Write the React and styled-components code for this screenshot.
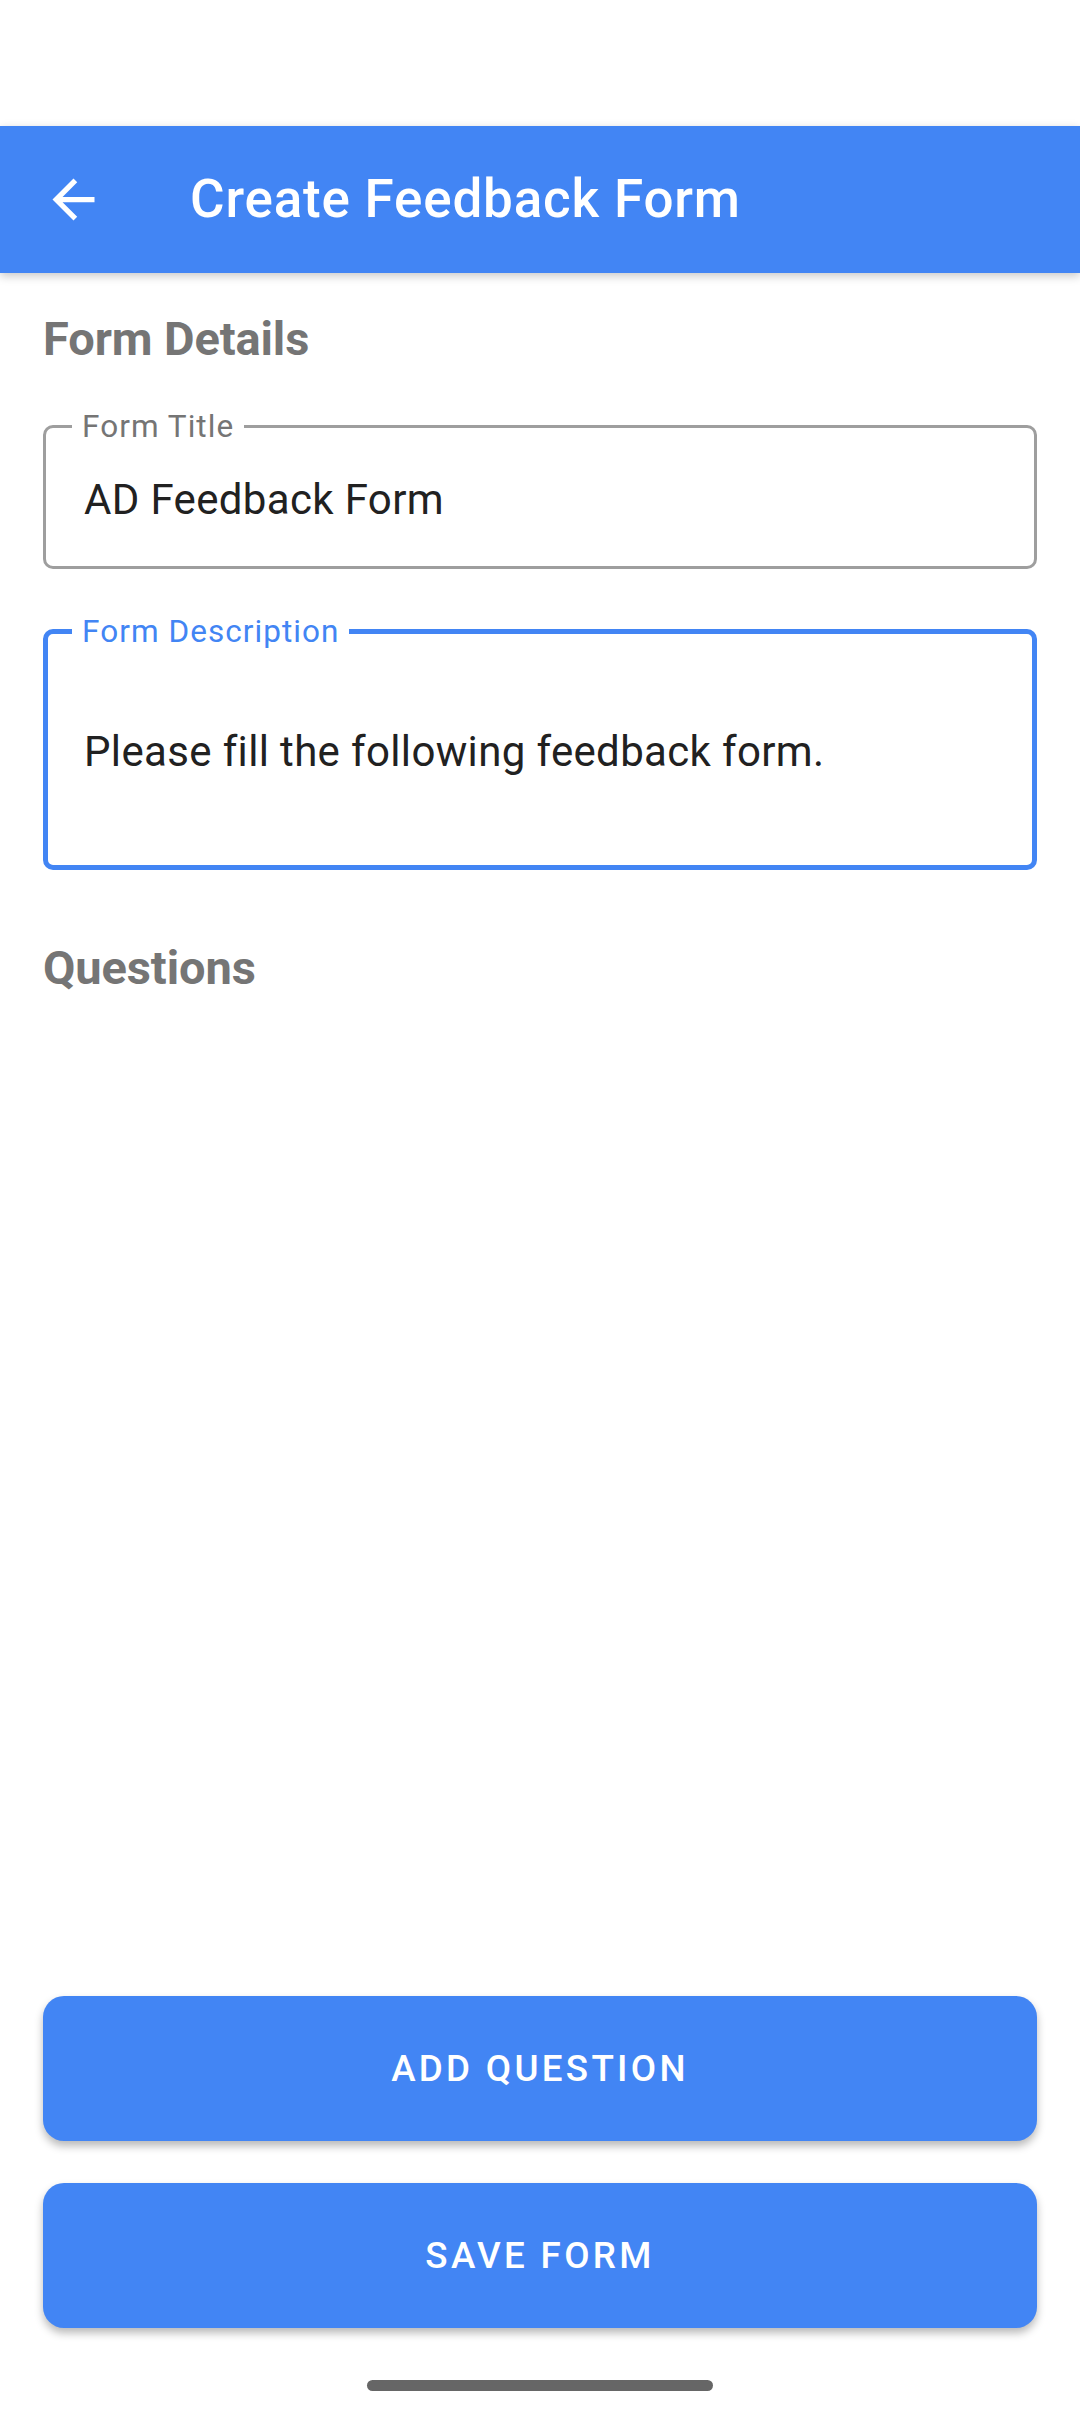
import * as React from "react";
import styled, { createGlobalStyle } from "styled-components";

const GlobalStyle = createGlobalStyle`
  html, body {
    margin: 0;
    padding: 0;
    background: #ffffff;
    font-family: Roboto, "Noto Sans", "Liberation Sans", sans-serif;
  }
  * {
    box-sizing: border-box;
  }
`;

function App() {
  return (
    <Screen>
      <GlobalStyle />
      <StatusBar />

      {/* Top app bar */}
      <AppBar>
        <BackButton aria-label="Back">
          <svg width="63" height="63" viewBox="0 0 24 24" fill="#ffffff">
            <path d="M20 11H7.83l5.59-5.59L12 4l-8 8 8 8 1.41-1.41L7.83 13H20v-2z" />
          </svg>
        </BackButton>
        <AppTitle>Create Feedback Form</AppTitle>
      </AppBar>

      <Content>
        <SectionTitle>Form Details</SectionTitle>

        <Field $height={144}>
          <FloatingLabel>Form Title</FloatingLabel>
          <FieldValue>AD Feedback Form</FieldValue>
        </Field>

        <Field $height={241} $focused>
          <FloatingLabel $focused>Form Description</FloatingLabel>
          <FieldValue>Please fill the following feedback form.</FieldValue>
        </Field>

        <SectionTitle $top={70}>Questions</SectionTitle>
      </Content>

      <Actions>
        <ActionButton>Add Question</ActionButton>
        <ActionButton>Save Form</ActionButton>
      </Actions>

      <NavBar>
        <NavHandle />
      </NavBar>
    </Screen>
  );
}

const Screen = styled.div`
  display: flex;
  flex-direction: column;
  min-height: 100vh;
  width: 100%;
  background: #ffffff;
`;

const StatusBar = styled.div`
  height: 126px;
  flex-shrink: 0;
`;

const AppBar = styled.header`
  height: 147px;
  flex-shrink: 0;
  display: flex;
  align-items: center;
  padding-left: 42px;
  background-color: #4285f4;
  box-shadow: 0 3px 9px rgba(0, 0, 0, 0.22);
  position: relative;
  z-index: 1;
`;

const BackButton = styled.div`
  width: 63px;
  height: 63px;
  display: flex;
  align-items: center;
  justify-content: center;
`;

const AppTitle = styled.h1`
  margin: 0 0 0 85px;
  font-size: 53px;
  font-weight: 500;
  line-height: 1;
  letter-spacing: 0.8px;
  color: #ffffff;
`;

const Content = styled.main`
  flex: 1;
  display: flex;
  flex-direction: column;
  padding: 0 43px;
`;

const SectionTitle = styled.h2`
  margin: ${(p) => p.$top || 38}px 0 0;
  font-size: 47px;
  font-weight: 700;
  line-height: 56px;
  letter-spacing: -0.1px;
  color: #757575;
`;

const Field = styled.div`
  position: relative;
  display: flex;
  align-items: center;
  height: ${(p) => p.$height}px;
  margin-top: ${(p) => (p.$focused ? 60 : 58)}px;
  padding: 6px 0 0 ${(p) => (p.$focused ? 36 : 38)}px;
  border: ${(p) => (p.$focused ? "5px solid #4285f4" : "3px solid #9e9e9e")};
  border-radius: 10px;
`;

const FloatingLabel = styled.span`
  position: absolute;
  top: ${(p) => (p.$focused ? -2.5 : -1.5)}px;
  left: ${(p) => (p.$focused ? 24 : 26)}px;
  transform: translateY(-50%);
  padding: 0 10px;
  background: #ffffff;
  font-size: 31.5px;
  line-height: 1;
  letter-spacing: 1.05px;
  color: ${(p) => (p.$focused ? "#4285f4" : "#757575")};
`;

const FieldValue = styled.span`
  font-size: 42px;
  line-height: 1.2;
  letter-spacing: 0.35px;
  color: #212121;
`;

const Actions = styled.div`
  display: flex;
  flex-direction: column;
  gap: 42px;
  padding: 0 43px;
`;

const ActionButton = styled.button`
  height: 145px;
  width: 100%;
  border: none;
  border-radius: 21px;
  background-color: #4285f4;
  box-shadow: 0 5px 9px rgba(0, 0, 0, 0.28);
  font-family: Roboto, "Noto Sans", "Liberation Sans", sans-serif;
  font-size: 36.75px;
  font-weight: 500;
  letter-spacing: 3.3px;
  text-transform: uppercase;
  color: #ffffff;
  cursor: pointer;
`;

const NavBar = styled.div`
  height: 84px;
  display: flex;
  justify-content: center;
  padding-top: 52px;
`;

const NavHandle = styled.div`
  width: 346px;
  height: 11px;
  border-radius: 6px;
  background: #666666;
`;

export default App;
